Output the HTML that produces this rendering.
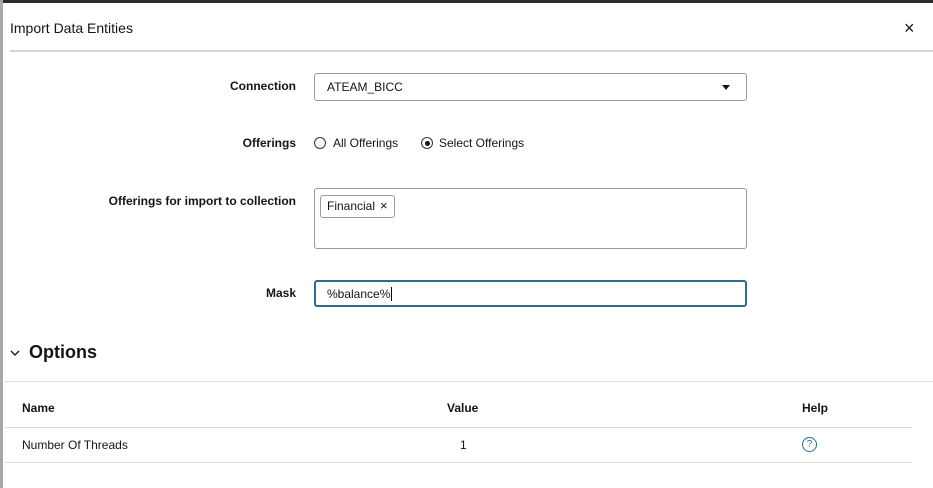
<!DOCTYPE html>
<html><head><style>
*{box-sizing:border-box;margin:0;padding:0}
body{width:933px;height:488px;overflow:hidden;background:#fff;font-family:"Liberation Sans",Arial,sans-serif;color:#161513;position:relative;font-size:12px}
.abs{position:absolute}
.lbl{position:absolute;right:637px;font-weight:bold;font-size:12px}
.box{position:absolute;left:314px;width:433px;border:1px solid #9a9a9a;border-radius:3px;background:#fff}
.th{position:absolute;top:401px;font-weight:bold;font-size:12px}
.line{position:absolute;height:1px;background:#dedede}
</style></head><body>
<div class="abs" style="left:0;top:0;width:933px;height:3px;background:#2b2b2b"></div>
<div class="abs" style="left:0;top:0;width:3px;height:488px;background:#a8a8a8"></div>
<div class="abs" style="left:10px;top:20px;font-size:14px">Import Data Entities</div>
<div class="abs" style="left:904px;top:18px;font-size:18px">×</div>
<div class="abs" style="left:10px;top:50px;width:923px;height:2px;background:#d4d4d4"></div>

<div class="lbl" style="top:79px">Connection</div>
<div class="box" style="top:73px;height:28px"><span class="abs" style="left:12px;top:6px">ATEAM_BICC</span>
<svg class="abs" style="left:407px;top:11px" width="8" height="5"><path d="M0 0h8L4 5z" fill="#161513"/></svg></div>

<div class="lbl" style="top:136px">Offerings</div>
<div class="abs" style="left:314px;top:137px;width:12px;height:12px;border:1px solid #333;border-radius:50%"></div>
<div class="abs" style="left:333px;top:136px">All Offerings</div>
<div class="abs" style="left:421px;top:137px;width:12px;height:12px;border:1px solid #333;border-radius:50%"><div class="abs" style="left:2.5px;top:2.5px;width:5px;height:5px;background:#161513;border-radius:50%"></div></div>
<div class="abs" style="left:439px;top:136px">Select Offerings</div>

<div class="lbl" style="top:194px">Offerings for import to collection</div>
<div class="box" style="top:188px;height:61px"><div class="abs" style="left:5px;top:6px;width:75px;height:23px;border:1px solid #9a9a9a;border-radius:3px"><span class="abs" style="left:6px;top:3px">Financial</span><span class="abs" style="left:59px;top:2px;font-size:13px">×</span></div></div>

<div class="lbl" style="top:286px">Mask</div>
<div class="box" style="top:280px;height:27px;border:2px solid #2f6b8f"><span class="abs" style="left:11px;top:5px">%balance%<span style="border-left:1px solid #000;margin-left:1px"></span></span></div>

<svg class="abs" style="left:10px;top:350px" width="10" height="7"><path d="M1 1l4 4 4-4" stroke="#161513" stroke-width="1.3" fill="none"/></svg>
<div class="abs" style="left:29px;top:342px;font-size:18px;font-weight:bold">Options</div>
<div class="line" style="left:5px;top:381px;width:928px"></div>
<div class="th" style="left:22px">Name</div>
<div class="th" style="left:447px">Value</div>
<div class="th" style="left:802px">Help</div>
<div class="line" style="left:5px;top:427px;width:907px"></div>
<div class="abs" style="left:22px;top:438px">Number Of Threads</div>
<div class="abs" style="left:460px;top:438px">1</div>
<div class="abs" style="left:802px;top:437px;width:15px;height:15px;border:1.3px solid #2f6b8f;border-radius:50%;color:#2f6b8f;font-size:10px;text-align:center;line-height:13px">?</div>
<div class="line" style="left:5px;top:462px;width:907px"></div>
</body></html>
